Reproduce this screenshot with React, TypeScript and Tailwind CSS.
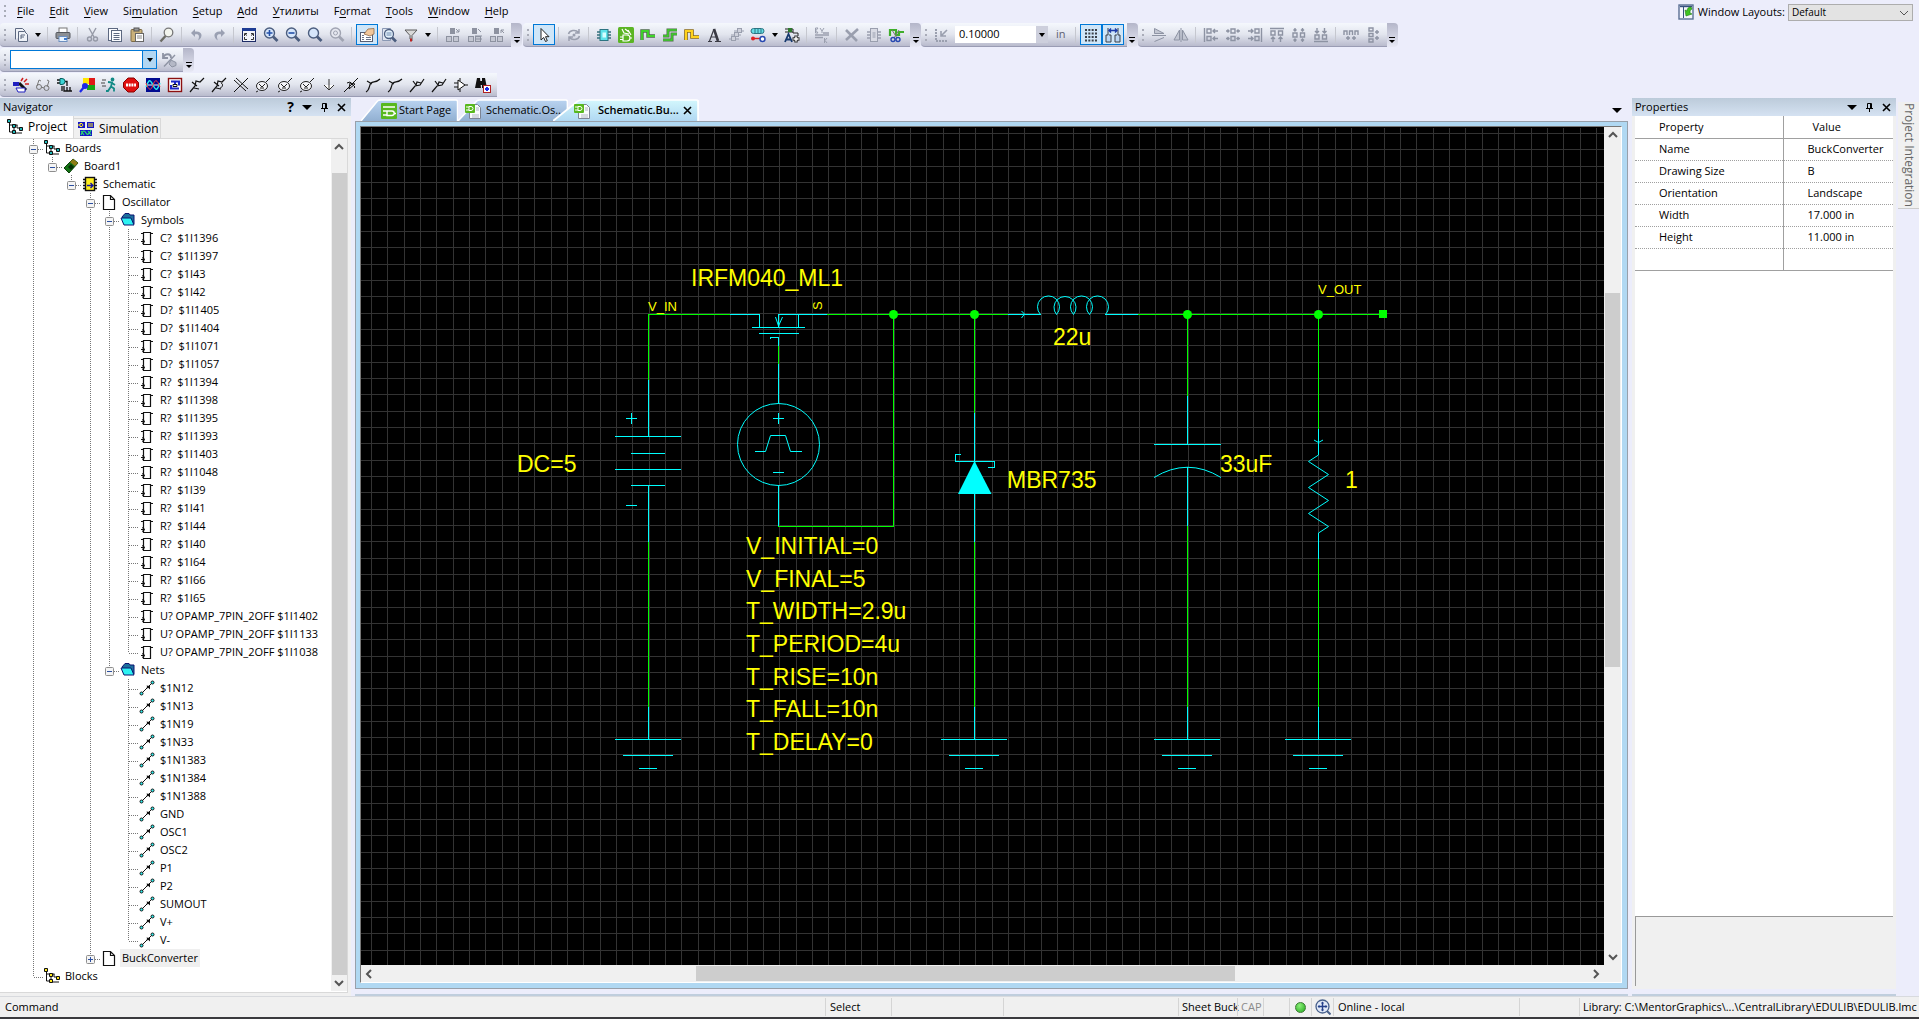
import { useState } from "react";
import type { ReactNode } from "react";

const magnifier = (color: string, fill: string) => (
  <>
    <path d="M10 9.5 14.5 14" stroke={color} strokeWidth="2.8" />
    <circle cx="6.5" cy="6" r="5" fill={fill} stroke={color} strokeWidth="1.4" />
  </>
);

const blocks = (
  <>
    <rect x="5" y="1" width="5" height="6" fill="#8d92a0" />
    <rect x="1.5" y="9.5" width="5" height="5" fill="#c4c7d2" stroke="#8d92a0" />
    <rect x="8.5" y="9.5" width="5" height="5" fill="#c4c7d2" stroke="#8d92a0" />
  </>
);

const meter = (
  <>
    <ellipse cx="7" cy="9" rx="5.5" ry="4.5" fill="#f4f4f8" stroke="#222" />
    <path d="M11 5 15 1M3 14l-2 1M4 7l3 3 3-3M5 11h4" stroke="#222" fill="none" />
  </>
);

const probe = (
  <path d="M1 15 6 9l1-5 4 1 4-4M3 5l5 4M5 11l5 1" stroke="#111" strokeWidth="1.2" fill="none" />
);

const icons: Record<string, ReactNode> = {
  newSheet: (
    <g fill="#eef1f7" stroke="#5c6880">
      <path d="M2.5 12.5v-11h7l3 3" />
      <path d="M5.5 4.5h6l3 3v7h-9z" />
      <path d="M8 12v-4h4M8 10h3" fill="none" />
    </g>
  ),
  print: (
    <>
      <rect x="4" y="1" width="8" height="5" fill="#fff" stroke="#777" />
      <rect x="1" y="5.5" width="14" height="6" rx="1" fill="#8c8f94" stroke="#55585e" />
      <rect x="4" y="9.5" width="8" height="5" fill="#eaf4ff" stroke="#6d8fc0" />
      <path d="M9 12h3" stroke="#3b7ad0" strokeWidth="2" />
    </>
  ),
  cut: (
    <g fill="none" stroke="#9599a6" strokeWidth="1.4">
      <path d="M4 1 9 10M11 1 6 10" />
      <circle cx="4.5" cy="12" r="2" />
      <circle cx="10.5" cy="12" r="2" />
    </g>
  ),
  copy: (
    <g fill="#fbfcff" stroke="#5c6880">
      <rect x="1.5" y="1.5" width="9" height="12" />
      <rect x="4.5" y="3.5" width="10" height="11" />
      <path d="M6.5 6.5h6M6.5 8.5h6M6.5 10.5h6M6.5 12.5h6" />
    </g>
  ),
  paste: (
    <>
      <rect x="2" y="2.5" width="11" height="12" rx="1" fill="#c9b07a" stroke="#7c6a45" />
      <rect x="5" y="1" width="5" height="3" fill="#999" stroke="#555" />
      <rect x="6.5" y="6.5" width="8" height="8" fill="#fff" stroke="#666" />
      <path d="M8 9h5M8 11h5" stroke="#888" />
    </>
  ),
  find: (
    <>
      <circle cx="9.5" cy="5.5" r="4.3" fill="#f3f5ee" stroke="#777" strokeWidth="1.3" />
      <path d="M6.5 9 1.5 14.5" stroke="#6c6c64" strokeWidth="2.4" />
    </>
  ),
  undo: <path d="M6 2 2 6l4 4V7.5c4-1 5 2 3 6 6-4 4-10-3-9z" fill="#9aa0b2" />,
  redo: <path d="M10 2l4 4-4 4V7.5c-4-1-5 2-3 6-6-4-4-10 3-9z" fill="#9aa0b2" />,
  fit: (
    <>
      <rect x="1.5" y="2" width="13" height="12.5" fill="#f2f4fa" stroke="#1d2b66" />
      <rect x="1" y="1" width="14" height="3" fill="#1d3c94" />
      <path
        d="M3.5 9V6.500H6M10 6.5h2.5V9M3.5 10v2.5H6M10 12.5h2.5V10M4 7l2 1.500M12 7l-2 1.500"
        stroke="#333"
        fill="none"
      />
    </>
  ),
  zoomIn: (
    <>
      {magnifier("#4b5d7e", "#d6e6fb")}
      <path d="M3.5 6h6M6.5 3v6" stroke="#2350a8" strokeWidth="1.6" />
    </>
  ),
  zoomOut: (
    <>
      {magnifier("#4b5d7e", "#d6e6fb")}
      <path d="M3.5 6h6" stroke="#2350a8" strokeWidth="1.6" />
    </>
  ),
  zoom: magnifier("#4b5d7e", "#d6e6fb"),
  zoomLast: (
    <>
      {magnifier("#a0a4b2", "#e6e8f0")}
      <circle cx="6.5" cy="6" r="2" fill="none" stroke="#a0a4b2" />
    </>
  ),
  properties: (
    <>
      <rect x="1.5" y="5.5" width="12" height="9" fill="#fff" stroke="#555e74" />
      <path d="M3 8.5h2M3 10.5h2M3 12.5h2M7 10.5h5M7 12.5h5" stroke="#6b7488" />
      <path d="M5 7l4-5 6-.5V7l-4 2z" fill="#f2c79a" stroke="#8f6a48" strokeWidth=".8" />
    </>
  ),
  review: (
    <>
      <path d="M1.500 1.500h8v12h-8z" fill="#dfe5f0" stroke="#8a98b4" />
      <path d="M11 10.500l4 4" stroke="#4b5d7e" strokeWidth="2.6" />
      <circle cx="8" cy="7" r="4.5" fill="#e3f1fb" stroke="#4b5d7e" strokeWidth="1.3" />
      <path d="M5.5 6h5M5.500 8h5" stroke="#6c88ad" />
    </>
  ),
  filter: (
    <>
      <path d="M2 3h12L9 8.5V14L7 12V8.5z" fill="#d9d9d9" stroke="#5a5a5a" />
      <path d="M8 11.5v3" stroke="#b22" strokeWidth="2" />
    </>
  ),
  blocksDown: (
    <>
      {blocks}
      <path d="M11 2l3 3M14 2v3h-3" stroke="#8d92a0" fill="none" />
    </>
  ),
  blocksList: (
    <>
      {blocks}
      <path d="M11 2l3 3M8 9h7M8 12h7" stroke="#8d92a0" fill="none" />
    </>
  ),
  blocksUp: (
    <>
      {blocks}
      <path d="M15 6l-3-3M12 6V3h3" stroke="#8d92a0" fill="none" />
    </>
  ),
  pointer: <path d="M5 1.5V13l2.700-2.500 1.800 4 1.800-.8-1.800-4H13z" fill="#fff" stroke="#222" />,
  reload: (
    <>
      <path
        d="M2.5 7a5.500 4.500 0 0 1 10-1.500M13.5 9a5.500 4.500 0 0 1-10 1.500M13 2v4H9M3 14v-4h4"
        fill="none"
        stroke="#9a9fae"
        strokeWidth="1.5"
      />
      <circle cx="8" cy="8" r="1.5" fill="#9a9fae" />
    </>
  ),
  part: (
    <>
      <path d="M1 5h14M1 8h14M1 11h14" stroke="#35707c" strokeWidth="1.6" />
      <rect x="4" y="2.5" width="8" height="11" fill="#5fe3ea" stroke="#2c7482" />
      <rect x="6.5" y="5.5" width="3.5" height="5" fill="#d8ffff" />
    </>
  ),
  library: (
    <>
      <rect width="16" height="16" rx="1.5" fill="#5bb524" />
      <path
        d="M5 8h4a3 3 0 0 1 0 6H5zM2 10h3M2 12.5h3M12 11h2M4 2l2 4 5 1M7 2l4 3M10 3l3 5"
        fill="none"
        stroke="#fff"
        strokeWidth="1.2"
      />
    </>
  ),
  net: (
    <>
      <path d="M2 13V4h6v5h7" fill="none" stroke="#4e6a4a" strokeWidth="3.4" />
      <path d="M2 13V4h6v5h7" fill="none" stroke="#3fd42a" strokeWidth="1.8" />
    </>
  ),
  bus: (
    <>
      <path d="M1 9h5V3h9M1 13h9V7h5" fill="none" stroke="#4e6a4a" strokeWidth="3" />
      <path d="M1 9h5V3h9M1 13h9V7h5" fill="none" stroke="#3fd42a" strokeWidth="1.5" />
    </>
  ),
  ripNet: (
    <>
      <path d="M2 13V4h6v6h7" fill="none" stroke="#8a6b14" strokeWidth="3.6" />
      <path d="M2 13V4h6v6h7" fill="none" stroke="#ffd21c" strokeWidth="2" />
    </>
  ),
  text: (
    <g fill="none" stroke="#3a3a44">
      <path d="M2 14.500h4M9 14.500h6M3.500 14 8 2M5 10h6" strokeWidth="1.2" />
      <path d="M8 2l4 12" strokeWidth="2.6" />
    </g>
  ),
  array: (
    <g fill="#cfd2dc" stroke="#9a9fae">
      <path d="M1 12h10M3 8h10M6 4h10" />
      <rect x="9.5" y="1.5" width="4" height="4" />
      <rect x="6.5" y="5.5" width="4" height="4" />
      <rect x="3.5" y="9.5" width="4" height="4" />
    </g>
  ),
  links: (
    <>
      <rect x="1" y="1.5" width="13" height="5" rx="2.5" fill="#66dfe6" stroke="#2c7482" />
      <path d="M5 2v4M8 2v4M11 2v4" stroke="#2c7482" />
      <path d="M3 11.5h8" stroke="#d22" strokeWidth="1.4" />
      <circle cx="3" cy="11.5" r="2" fill="#d22" />
      <circle cx="12.5" cy="12" r="2.5" fill="#fff" stroke="#2748b0" strokeWidth="1.4" />
    </>
  ),
  addText: (
    <>
      <path d="M1 2h8M1 5h8M9 2v4h5v3" stroke="#222" fill="none" />
      <rect x="4" y="1" width="4" height="4" fill="#2d7a2d" />
      <path d="M1 15 4.5 7 8 15M2.5 12.5h4" stroke="#17396e" strokeWidth="1.8" fill="none" />
      <path d="M12 8.5v7M8.5 12h7" stroke="#333" strokeWidth="3.4" />
      <path d="M12 9.5v5M9.5 12h5" stroke="#fff" strokeWidth="1.5" />
    </>
  ),
  swap: (
    <g fill="none" stroke="#9a9fae">
      <path d="M1.500 1v5h2.500l-2-2.500 2-2.500zM6 1l2 3 2-3M8 4v2" />
      <path d="M1 8h14M1 10.500h8M9 6h6" strokeWidth="1.6" />
      <path d="M10.500 11v5M13 11l-2 2.500 2 2.500" />
    </g>
  ),
  remove: <path d="M2 3 13 14M14 2 2 13" stroke="#9a9fae" strokeWidth="2.6" />,
  partGray: (
    <>
      <path d="M1 5h14M1 8h14M1 11h14" stroke="#9a9fae" strokeWidth="1.6" />
      <rect x="4.5" y="1.5" width="7" height="13" fill="#d9dbe4" stroke="#9a9fae" />
      <rect x="6.5" y="5" width="3" height="6" fill="#b9bdc9" />
    </>
  ),
  cutNet: (
    <>
      <path d="M2 9V3h6v5h3V5h5" fill="none" stroke="#3fae2a" strokeWidth="2.2" />
      <path d="M4 3l5 8M11 3l-5 8" stroke="#777" />
      <circle cx="5" cy="12.5" r="2" fill="none" stroke="#2748b0" strokeWidth="1.4" />
      <circle cx="10" cy="12.5" r="2" fill="none" stroke="#2748b0" strokeWidth="1.4" />
    </>
  ),
  snapOrigin: (
    <>
      <path d="M2 2v12h12" fill="none" stroke="#9a9fae" strokeWidth="2" strokeDasharray="2 1" />
      <path d="M13 3 7 9M7 4v5h5" fill="none" stroke="#9a9fae" strokeWidth="1.6" />
    </>
  ),
  gridDots: (
    <path
      d="M2 3h12M2 6.500h12M2 10h12M2 13.500h12"
      stroke="#3a4048"
      strokeWidth="1.8"
      strokeDasharray="2 1.330"
    />
  ),
  spacing: (
    <>
      <path d="M3 1v7H1v7h5V8H4M13 1v7h2v7h-5V8h2" fill="#bcd6f2" stroke="#3a4048" />
      <path d="M4 3.5h8M6 1.5l-2 2 2 2M10 1.5l2 2-2 2" fill="none" stroke="#1d3ca8" strokeWidth="1.4" />
    </>
  ),
  flipV: <path d="M3.500 1.500 13 6.500H3.500zM1 8.500h14M3.500 14.500 13 10.500" fill="#c3c7d3" stroke="#8d93a3" />,
  flipH: <path d="M6.5 3 1 13h5.5zM9.5 3 15 13H9.5zM8 1v14" fill="#c3c7d3" stroke="#8d93a3" />,
  alignLeft: (
    <path
      d="M1.5 1v14M4 2h4v4H4zM4 9.5h4v4H4zM15 4h-5M12 2l-2 2 2 2M15 11.5h-5M12 9.5l-2 2 2 2"
      fill="none"
      stroke="#8d93a3"
      strokeWidth="1.4"
    />
  ),
  alignCenter: (
    <path
      d="M6 2h4v4H6zM6 9.5h4v4H6zM1 4h3M2.5 2.5 4 4 2.5 5.5M15 4h-3M13.5 2.5 12 4l1.5 1.5M1 11.5h3M2.5 10 4 11.5 2.5 13M15 11.5h-3M13.5 10 12 11.5l1.5 1.5"
      fill="none"
      stroke="#8d93a3"
      strokeWidth="1.4"
    />
  ),
  alignRight: (
    <path
      d="M14.5 1v14M8 2h4v4H8zM8 9.5h4v4H8zM1 4h5M4 2l2 2-2 2M1 11.5h5M4 9.5l2 2-2 2"
      fill="none"
      stroke="#8d93a3"
      strokeWidth="1.4"
    />
  ),
  alignTop: (
    <path
      d="M1 1.5h14M2 4h4v4H2zM9.5 4h4v4h-4zM4 15v-5M2 12l2-2 2 2M11.5 15v-5M9.5 12l2-2 2 2"
      fill="none"
      stroke="#8d93a3"
      strokeWidth="1.4"
    />
  ),
  alignMiddle: (
    <path
      d="M2 6h4v4H2zM9.5 6h4v4h-4zM4 1v3M2.5 2.5 4 4l1.5-1.5M11.5 1v3M10 2.5 11.5 4 13 2.5M4 15v-3M2.5 13.5 4 12l1.5 1.5M11.5 15v-3M10 13.5l1.5-1.5 1.5 1.5"
      fill="none"
      stroke="#8d93a3"
      strokeWidth="1.4"
    />
  ),
  alignBottom: (
    <path
      d="M1 14.5h14M2 8h4v4H2zM9.5 8h4v4h-4zM4 1v5M2 4l2 2 2-2M11.5 1v5M9.5 4l2 2 2-2"
      fill="none"
      stroke="#8d93a3"
      strokeWidth="1.4"
    />
  ),
  spreadH: (
    <path
      d="M1 8V4h3v4M6.5 8V4h3v4M12 8V4h3v4M3 11h4M9 11h4M5 9v4M11 9v4"
      fill="none"
      stroke="#8d93a3"
      strokeWidth="1.4"
    />
  ),
  spreadV: (
    <path
      d="M4 1h4v3H4zM4 6.5h4v3H4zM4 12h4v3H4zM10 5h4M12 3v4M10 11h4M12 9v4"
      fill="none"
      stroke="#8d93a3"
      strokeWidth="1.4"
    />
  ),
  crossProbe: (
    <>
      <path d="M2 1v5h5M2 6c2-5 8-5 8 0" fill="none" stroke="#8d93a3" strokeWidth="1.8" />
      <path d="M3 14.500 14 3" stroke="#8d93a3" strokeWidth="1.4" />
      <path d="M10 8l5 2.500v3l-4 1.500-3-3z" fill="#b4b8c6" stroke="#8d93a3" />
    </>
  ),
  wizard: (
    <>
      <path d="M6 6l7 7" stroke="#111" strokeWidth="3" />
      <rect x="0" y="5" width="6" height="4" fill="#2020c0" />
      <path d="M3 11h9v4H5z" fill="#fff" stroke="#2020c0" />
      <path d="M8 4l2-3M11 5l3-3M12 7h4" stroke="#d02020" strokeWidth="1.5" />
    </>
  ),
  glasses: (
    <g fill="none" stroke="#777">
      <path d="M2 9 4 3l2 1M12 10l2-6-2-1M6 10l3 1" />
      <circle cx="4" cy="10" r="2.5" />
      <circle cx="11.5" cy="11" r="2.5" />
    </g>
  ),
  plugNetlist: (
    <>
      <path d="M0 3h3M0 6h3M7 4.5h3V9M5 9v5M7 9v5h8M10 10v4M13 10v4" stroke="#111" strokeWidth="1.3" fill="none" />
      <path d="M3 1.5h2a3 3 0 0 1 0 6H3z" fill="#3dd6d6" stroke="#0a6060" />
    </>
  ),
  palette: (
    <>
      <rect x="4" y="1" width="6" height="6" fill="#ffe600" />
      <rect x="10" y="1" width="6" height="7" fill="#e01818" />
      <rect x="8" y="8" width="8" height="5" fill="#16a516" />
      <circle cx="6" cy="9" r="3" fill="#1c28e8" />
      <path d="M1 15l4-5" stroke="#1c28e8" strokeWidth="2.2" />
    </>
  ),
  run: (
    <g fill="none" stroke="#128a86" strokeWidth="1.8">
      <circle cx="11.5" cy="2.5" r="1" />
      <path d="M7 5l4 .5-1 4 3 2v3M10 9.5 7 14H5M11 6l3 2" />
      <path d="M1 3h4M0 6h4M1 9h4" stroke="#444" strokeWidth="1" />
    </g>
  ),
  stop: (
    <>
      <path d="M5 1h6l4.5 4.5v5L11 15H5L.5 10.5v-5z" fill="#e01010" stroke="#800" />
      <path d="M3 8h10" stroke="#fff" strokeWidth="3" strokeDasharray="2 .7" />
    </>
  ),
  waves: (
    <>
      <rect x="1" y="1" width="14" height="14" fill="#000a90" />
      <path d="M1 8h14" stroke="#fff" />
      <path d="M1 10c3-8 4-8 7-2s4 6 7-2" stroke="#2ee" strokeWidth="1.5" fill="none" />
      <path d="M1 6c3 8 5 8 7 2s4-6 7 2" stroke="#f33" fill="none" />
    </>
  ),
  simView: (
    <>
      <rect x="1.5" y="1.5" width="13" height="13" fill="#fff" stroke="#8c1010" strokeWidth="1.4" />
      <path d="M4 4.500h8v4M12 11.500H4V8M8 4v3" stroke="#1c28c8" strokeWidth="2" fill="none" />
      <path d="M6 7.500h4v2H6z" stroke="#111" fill="none" />
    </>
  ),
  probeV: probe,
  probeI: (
    <>
      {probe}
      <path d="M10 6c3 1 1 5-1 5" stroke="#111" fill="none" />
    </>
  ),
  probeDiff: <path d="M1 15 15 1M1 3l12 11M3 1l12 11" stroke="#111" fill="none" />,
  meter,
  ground: <path d="M8 2v10M3 8l5 5 5-5" stroke="#333" fill="#fff" />,
  diode: <path d="M1 15 15 1M4 6l3-1 5 5-1 1M6 12l1-6 5 1z" stroke="#111" fill="none" />,
  netCurve: <path d="M1 15c4-2 3-7 5-9s5 0 9-4M2 4l5 3" stroke="#111" strokeWidth="1.2" fill="none" />,
  netPeak: <path d="M1 15 6 9l5-1 4-6M4 4l3 4 1-3 4 1" stroke="#111" fill="none" strokeWidth="1.2" />,
  gate: <path d="M1 6h4M1 10h4M5 3l7 5-7 5zM12 8h3M7 1v3M7 12v3" stroke="#111" fill="#fff" />,
  findPart: (
    <>
      <path d="M2 1h3l1 10H0zM7 1h3l2 10H7zM5 4h3v4H5z" fill="#111" />
      <rect x="8.5" y="8.5" width="7" height="7" fill="#fff" stroke="#b02020" />
      <path d="M10 12h4M12 10v4" stroke="#1c28e8" strokeWidth="2" />
    </>
  ),
  layouts: (
    <>
      <rect x="1" y="1" width="14" height="14" fill="#f4f6fb" stroke="#5a6f94" strokeWidth="1.4" />
      <path d="M2 2.500h12" stroke="#34507e" strokeWidth="1.400" />
      <path d="M5.500 3v11" stroke="#34507e" />
      <path d="M13 3c-3 0-4 2-4 4l-2-1 1 6 6-2-2-1c0-2 0-3 2-4z" fill="#3fc41f" stroke="#1f7a12" strokeWidth=".6" />
    </>
  ),
  tree: (
    <>
      <path d="M2.5 2v11H8M2.5 6h8M10 6v3h4M7 9v5h8" stroke="#111" fill="none" />
      <path d="M.5.5h3v3h-3zM5.500 5.500h3v3h-3zM12.500 8.500h3v3h-3zM5.500 11.500h3v3h-3z" fill="#1fb8b8" stroke="#111" />
    </>
  ),
  treeYellow: (
    <>
      <path d="M2.5 2v11H8M2.5 6h8M10 6v3h4M7 9v5h8" stroke="#111" fill="none" />
      <path d="M.5.5h3v3h-3zM5.500 5.500h3v3h-3zM12.500 8.500h3v3h-3zM5.500 11.500h3v3h-3z" fill="#ffe81c" stroke="#111" />
    </>
  ),
  simTab: (
    <>
      <path d="M0 1h7v6H0zM9 1h7v6H9z" fill="#1414c8" />
      <path d="M0 4h2M2 2.500h2q2 1.500 0 3H2zM10 3h5M10 5h5" stroke="#ffee20" fill="none" />
      <rect x="2" y="9" width="12" height="6" fill="#1414c8" />
      <path d="M3 14c2-6 4-4 5-2s3 2 5-3M3 10l3 4M10 10l3 4" stroke="#2ee06a" fill="none" strokeWidth="1.2" />
    </>
  ),
  board: (
    <>
      <path d="M1 10 10 1l5 4-9 10z" fill="#157315" stroke="#0a3d0a" />
      <path d="M10 1l5 4-3 3-5-4z" fill="#8c7b14" />
      <path d="M5 9l3-3 3 3-3 3z" fill="#053005" />
    </>
  ),
  schematic: (
    <>
      <path d="M1 3.500h14M1 6.500h14M1 9.500h14M1 12.500h14" stroke="#111" strokeWidth="1.4" />
      <rect x="3.5" y="1.5" width="9" height="13" fill="#ffee20" stroke="#111" strokeWidth="1.4" />
      <path d="M5 9.5h6M8.5 7l2.5 2.5L8.5 12" stroke="#1414a0" fill="none" strokeWidth="1.4" />
    </>
  ),
  sheet: <path d="M2.5 1.5h7l4 4v10h-11zM9.5 1.5v4h4" fill="#fff" stroke="#111" strokeWidth="1.2" />,
  folder: (
    <>
      <path d="M2 5 5 1.5h4L10 3h4v9H6z" fill="#1c6f9c" stroke="#0b1470" />
      <path d="M1 6h10l3 7H4z" fill="#2df2f2" stroke="#0b1470" />
    </>
  ),
  symbol: (
    <>
      <path d="M2 3.5h12M2 11.5h3" stroke="#111" />
      <path d="M4.5 2.5h7v12h-7z" fill="#fff" stroke="#111" strokeWidth="1.2" />
      <path d="M3 9.500l3 2-3 2" fill="none" stroke="#111" />
    </>
  ),
  netNode: (
    <>
      <path d="M3 13 13 3" stroke="#111" />
      <path d="M7.500 5.500l3.500.500v3.500l-1.500-1.500-2 .5.500-2z" fill="#111" />
      <circle cx="2.5" cy="13.5" r="1.500" fill="#2df2f2" stroke="#111" />
      <circle cx="13.5" cy="2.5" r="1.500" fill="#2df2f2" stroke="#111" />
    </>
  ),
  startPage: (
    <>
      <rect width="16" height="16" rx="1" fill="#58b81e" />
      <path
        d="M2 4h12M2 8h4M2 12h4M6 8h5a2 2 0 0 1 0 4.500H6zM13 10.500h2"
        stroke="#fff"
        strokeWidth="1.4"
        fill="none"
      />
    </>
  ),
  docSheet: (
    <>
      <path d="M4.500 1.500h8l3 3v11h-11z" fill="#fafbfd" stroke="#7c8494" />
      <path d="M11 5h3M11 7h3M7 12h7M7 14h7" stroke="#b0b6c4" />
      <rect x="0" y="1" width="10" height="9" rx="1" fill="#58b81e" />
      <path d="M1 4h3M1 7h3M4 3.5h2a2 2 0 0 1 0 4H4z" stroke="#fff" fill="none" />
    </>
  ),
  panZoom: (
    <>
      <path d="M12 12l3.5 3.5" stroke="#48608c" strokeWidth="2" />
      <circle cx="7.5" cy="7.5" r="6.5" fill="#dfe7f6" stroke="#48608c" strokeWidth="1.3" />
      <path d="M7.5 3v9M3 7.5h9" stroke="#25408a" strokeWidth="1.4" />
      <path
        d="M6 4.5 7.5 2.5 9 4.5zM6 10.5l1.5 2 1.5-2zM4.5 6l-2 1.5 2 1.5zM10.5 6l2 1.5-2 1.5z"
        fill="#25408a"
      />
    </>
  ),
};

function Icon({ name }: { name: string }) {
  return (
    <svg viewBox="0 0 16 16" className="h-4 w-4 shrink-0" aria-hidden="true">
      {icons[name]}
    </svg>
  );
}

function Caret() {
  return <span className="h-0 w-0 border-x-3 border-t-4 border-x-transparent border-t-black" />;
}

function Grip() {
  return (
    <span className="flex w-[10px] shrink-0 flex-col items-center gap-[3px]">
      <span className="h-[2px] w-[2px] bg-[#a9acb8]" />
      <span className="h-[2px] w-[2px] bg-[#a9acb8]" />
      <span className="h-[2px] w-[2px] bg-[#a9acb8]" />
    </span>
  );
}

function ToolButton({ name, active }: { name: string; active?: boolean }) {
  return (
    <button
      type="button"
      aria-label={name}
      className={
        active
          ? "flex h-[21px] w-[22px] shrink-0 items-center justify-center border border-[#0078d7] bg-[#cfe6f8]"
          : "flex h-[21px] w-[22px] shrink-0 items-center justify-center"
      }
    >
      <Icon name={name} />
    </button>
  );
}

// "|" is a separator, "v" a drop-down arrow, a leading "*" marks a pressed button
function Tools({ items }: { items: string[] }) {
  return (
    <>
      {items.map((item, i) => {
        if (item === "|") {
          return <span key={i} className="mr-1 ml-[3px] h-4 w-px shrink-0 bg-[#c5c7cf]" />;
        }
        if (item === "v") {
          return (
            <button
              key={i}
              type="button"
              aria-label="More"
              className="flex h-5 w-3 shrink-0 items-center justify-center"
            >
              <Caret />
            </button>
          );
        }
        return <ToolButton key={i} name={item.replace("*", "")} active={item.startsWith("*")} />;
      })}
    </>
  );
}

function Toolbar({ children, cap = true }: { children: ReactNode; cap?: boolean }) {
  return (
    <div className="flex h-6 shrink-0">
      <div className="flex items-center rounded-l-sm border-b border-[#9a9cb4] bg-linear-to-b from-[#f5f8fd] via-[#e2e5ee] to-[#b9bbcd] pr-[3px]">
        <Grip />
        {children}
      </div>
      {cap && (
        <button
          type="button"
          aria-label="Toolbar options"
          className="flex w-[11px] flex-col items-center justify-end gap-[2px] rounded-r-sm bg-linear-to-b from-[#b4b6c9] to-[#e8e9f5] pb-1"
        >
          <span className="h-px w-[6px] bg-black" />
          <span className="h-0 w-0 border-x-3 border-t-3 border-x-transparent border-t-black" />
        </button>
      )}
    </div>
  );
}

// label split around its underlined access key
const menus: [string, string, string][] = [
  ["", "F", "ile"],
  ["", "E", "dit"],
  ["", "V", "iew"],
  ["Si", "m", "ulation"],
  ["", "S", "etup"],
  ["", "A", "dd"],
  ["", "У", "тилиты"],
  ["F", "o", "rmat"],
  ["", "T", "ools"],
  ["", "W", "indow"],
  ["", "H", "elp"],
];

const mainTools = [
  "newSheet", "v", "|", "print", "|", "cut", "copy", "paste", "|", "find", "|", "undo", "redo", "|",
  "fit", "zoomIn", "zoomOut", "zoom", "zoomLast", "|", "*properties", "review", "filter", "v", "|",
  "blocksDown", "blocksList", "blocksUp",
];

const drawTools = [
  "*pointer", "|", "reload", "|", "part", "library", "net", "bus", "ripNet", "text", "array", "links", "v",
  "addText", "|", "swap", "|", "remove", "partGray", "cutNet",
];

const arrangeTools = [
  "flipV", "flipH", "|", "alignLeft", "alignCenter", "alignRight", "alignTop", "alignMiddle", "alignBottom", "|",
  "spreadH", "spreadV",
];

const simTools = [
  "wizard", "glasses", "plugNetlist", "palette", "run", "stop", "waves", "simView", "probeV", "probeI", "probeDiff",
  "meter", "meter", "meter", "ground", "diode", "netCurve", "netCurve", "netPeak", "netPeak", "gate", "findPart",
];

function MenuArea() {
  const [grid, setGrid] = useState("0.10000");
  return (
    <header className="flex shrink-0 flex-col gap-px pb-px">
      <div className="flex h-[22px] items-center justify-between">
        <nav className="flex items-center">
          <Grip />
          <span className="w-[7px]" />
          {menus.map(([before, key, after]) => (
            <button key={key + after} type="button" className="mr-[15px] leading-4">
              {before}
              <span className="underline underline-offset-2">{key}</span>
              {after}
            </button>
          ))}
        </nav>
        <div className="flex items-center pt-[2px] pr-[6px]">
          <Icon name="layouts" />
          <label htmlFor="layout" className="mr-[3px] ml-1">
            Window Layouts:
          </label>
          <span className="relative">
            <select
              id="layout"
              className="block h-[17px] w-[125px] appearance-none border border-[#adadad] bg-[#e3e3e3] pl-[3px] text-[10px] leading-[15px]"
            >
              <option>Default</option>
            </select>
            <svg viewBox="0 0 10 6" className="pointer-events-none absolute top-[6px] right-1 h-[6px] w-[10px]">
              <path d="M1 1l4 4 4-4" fill="none" stroke="#555" />
            </svg>
          </span>
        </div>
      </div>
      <div className="flex">
        <Toolbar>
          <Tools items={mainTools} />
        </Toolbar>
        <span className="w-px" />
        <Toolbar>
          <Tools items={drawTools} />
        </Toolbar>
        <Toolbar>
          <ToolButton name="snapOrigin" />
          <span className="ml-[2px] flex h-[17px] bg-white">
            <input
              aria-label="Grid spacing"
              value={grid}
              onChange={(e) => setGrid(e.target.value)}
              className="w-[81px] pl-1"
            />
            <button type="button" aria-label="Grid list" className="flex w-3 items-center justify-center bg-[#cdcfdc]">
              <Caret />
            </button>
          </span>
          <span className="pr-[6px] pl-2 text-[#5d6070]">in</span>
          <Tools items={["|", "*gridDots", "*spacing"]} />
        </Toolbar>
        <Toolbar>
          <Tools items={arrangeTools} />
        </Toolbar>
      </div>
      <Toolbar>
        <span className="flex h-[19px] border border-[#0078d7] bg-white">
          <input aria-label="Find text" className="w-[131px]" />
          <button
            type="button"
            aria-label="Find list"
            className="flex w-[14px] items-center justify-center border-l border-[#0078d7] bg-[#b3d7f2]"
          >
            <Caret />
          </button>
        </span>
        <span className="w-px" />
        <ToolButton name="crossProbe" />
      </Toolbar>
      <Toolbar cap={false}>
        <Tools items={simTools} />
      </Toolbar>
    </header>
  );
}

interface TreeRow {
  depth: number;
  icon: string;
  label: string;
  state?: "open" | "closed";
  last?: boolean;
  selected?: boolean;
}

const symbols = [
  "C?  $1I1396", "C?  $1I1397", "C?  $1I43", "C?  $1I42", "D?  $1I1405", "D?  $1I1404", "D?  $1I1071", "D?  $1I1057",
  "R?  $1I1394", "R?  $1I1398", "R?  $1I1395", "R?  $1I1393", "R?  $1I1403", "R?  $1I1048", "R?  $1I39", "R?  $1I41",
  "R?  $1I44", "R?  $1I40", "R?  $1I64", "R?  $1I66", "R?  $1I65", "U? OPAMP_7PIN_2OFF $1I1402",
  "U? OPAMP_7PIN_2OFF $1I1133", "U? OPAMP_7PIN_2OFF $1I1038",
];

const nets = [
  "$1N12", "$1N13", "$1N19", "$1N33", "$1N1383", "$1N1384", "$1N1388", "GND", "OSC1", "OSC2", "P1", "P2", "SUMOUT",
  "V+", "V-",
];

const rows: TreeRow[] = [
  { depth: 0, icon: "tree", label: "Boards", state: "open" },
  { depth: 1, icon: "board", label: "Board1", state: "open", last: true },
  { depth: 2, icon: "schematic", label: "Schematic", state: "open", last: true },
  { depth: 3, icon: "sheet", label: "Oscillator", state: "open" },
  { depth: 4, icon: "folder", label: "Symbols", state: "open" },
  ...symbols.map((label, i) => ({ depth: 5, icon: "symbol", label, last: i === symbols.length - 1 })),
  { depth: 4, icon: "folder", label: "Nets", state: "open", last: true },
  ...nets.map((label, i) => ({ depth: 5, icon: "netNode", label, last: i === nets.length - 1 })),
  { depth: 3, icon: "sheet", label: "BuckConverter", state: "closed", last: true, selected: true },
  { depth: 0, icon: "treeYellow", label: "Blocks", last: true },
];

// true when an ancestor level still has siblings further down
function hasGuide(index: number, depth: number) {
  const next = rows.slice(index + 1).find((row) => row.depth <= depth);
  return next !== undefined && next.depth === depth;
}

function NavigatorTree() {
  return (
    <ul className="flex-1 overflow-hidden">
      {rows.map((row, i) => (
        <li key={row.label} className="flex h-[18px] items-center pl-[24px]">
          {Array.from({ length: row.depth }, (_, d) => (
            <svg key={d} viewBox="0 0 19 18" className="h-[18px] w-[19px] shrink-0">
              {hasGuide(i, d) && <path d="M9.5 0v18" stroke="#777" strokeDasharray="1 1" />}
            </svg>
          ))}
          <svg viewBox="0 0 20 18" className="h-[18px] w-[20px] shrink-0">
            <path
              d={`M9.5 0v${row.last ? 10 : 18}M10 10.5h10`}
              fill="none"
              stroke="#777"
              strokeDasharray="1 1"
            />
            {row.state && (
              <>
                <rect x="5.5" y="6.5" width="8" height="8" rx="1" fill="#f4f4f4" stroke="#8e8e8e" />
                <path d={row.state === "open" ? "M7 10.5h5" : "M7 10.5h5M9.5 8v5"} stroke="#2b4fa0" />
              </>
            )}
          </svg>
          <Icon name={row.icon} />
          <span
            className={
              row.selected
                ? "ml-[3px] bg-[#efefef] px-[2px] leading-[18px] whitespace-pre"
                : "ml-[5px] leading-[18px] whitespace-pre"
            }
          >
            {row.label}
          </span>
        </li>
      ))}
    </ul>
  );
}

function PanelHeader({ title, help }: { title: string; help?: boolean }) {
  return (
    <div className="flex h-[18px] shrink-0 items-center justify-between bg-linear-to-b from-[#bccbda] to-[#d5e2f2] pr-[5px] pl-[3px]">
      <h2>{title}</h2>
      <div className="flex items-center gap-[8px]">
        {help && (
          <button type="button" className="text-sm leading-4 font-bold">
            ?
          </button>
        )}
        <button type="button" aria-label="Menu" className="flex">
          <span className="h-0 w-0 border-x-5 border-t-5 border-x-transparent border-t-black" />
        </button>
        <button type="button" aria-label="Pin">
          <svg viewBox="0 0 9 9" className="h-[9px] w-[9px]">
            <path d="M2.5 5.5v-5h4v5M5.5 0v5M1 5.5h7M4.5 6v3" fill="none" stroke="#000" />
          </svg>
        </button>
        <button type="button" aria-label="Close">
          <svg viewBox="0 0 9 9" className="h-[9px] w-[9px]">
            <path d="M1 1l7 7M8 1 1 8" stroke="#000" strokeWidth="1.6" />
          </svg>
        </button>
      </div>
    </div>
  );
}

const arrows: Record<string, string> = {
  up: "M1 7l4-4 4 4",
  down: "M1 3l4 4 4-4",
  left: "M7 1 3 5l4 4",
  right: "M3 1l4 4-4 4",
};

function ScrollArrow({ dir }: { dir: string }) {
  return (
    <button type="button" aria-label={`Scroll ${dir}`} className="flex h-4 w-4 shrink-0 items-center justify-center">
      <svg viewBox="0 0 10 10" className="h-[10px] w-[10px]">
        <path d={arrows[dir]} fill="none" stroke="#555" strokeWidth="2" />
      </svg>
    </button>
  );
}

function Navigator() {
  return (
    <aside className="flex w-[351px] shrink-0 flex-col bg-[#f0f0f0]">
      <PanelHeader title="Navigator" help />
      <div role="tablist" className="flex h-[22px] shrink-0 items-end">
        <button
          type="button"
          role="tab"
          className="flex h-[22px] w-[74px] items-center gap-[5px] border-r border-[#d9d9d9] bg-white pl-[7px] text-xs"
        >
          <Icon name="tree" />
          Project
        </button>
        <button
          type="button"
          role="tab"
          className="flex h-[20px] w-[87px] items-center gap-[5px] border-t border-r border-[#d9d9d9] pl-[4px] text-xs"
        >
          <Icon name="simTab" />
          Simulation
        </button>
      </div>
      <div className="mr-[3px] mb-[3px] flex min-h-0 flex-1 border-t border-r border-b border-[#d9d9d9] bg-white pb-px">
        <NavigatorTree />
        <div className="flex w-4 flex-col items-center bg-[#f0f0f0]">
          <ScrollArrow dir="up" />
          <span className="h-[18px]" />
          <span className="w-[15px] flex-1 bg-[#cdcdcd]" />
          <ScrollArrow dir="down" />
        </div>
      </div>
    </aside>
  );
}

function TabShape({ active }: { active?: boolean }) {
  return (
    <svg viewBox="0 0 100 22" preserveAspectRatio="none" className="absolute inset-0 -z-10 h-full w-full">
      <defs>
        <linearGradient id="tab-idle" x2="0" y2="1">
          <stop stopColor="#b9d3f0" />
          <stop offset="1" stopColor="#92b0d2" />
        </linearGradient>
        <linearGradient id="tab-active" x2="0" y2="1">
          <stop stopColor="#d3f7fd" />
          <stop offset="1" stopColor="#b0d8f2" />
        </linearGradient>
      </defs>
      <path
        d="M0 22 17 2Q18 1 20 1H98Q99.5 1 99.5 3V22"
        fill={active ? "url(#tab-active)" : "url(#tab-idle)"}
        stroke="#fff"
        strokeWidth="1.5"
      />
    </svg>
  );
}

// wires and devices are given in window pixels, the sheet group shifts them into place
const wires = [
  "M648.5 380V314.5H730",
  "M827 314.5H1008",
  "M1138 314.5H1383",
  "M778.5 346V364",
  "M778 526.5H893.5V314",
  "M648.5 542V707",
  "M974.5 314V413M974.5 542V707",
  "M1187.5 314V396M1187.5 526V707",
  "M1318.5 314V429M1318.5 559V707",
];

const devices = [
  // battery
  "M648.5 380V436M615 436.5H681M631 453.5H665M615 469.5H681M631 485.5H665M648.5 485V542",
  "M626 418.5H637M631.5 413V424M626 505.5H637",
  // mosfet
  "M730 314.5H759.5V327M752 327.5H805M759 333.5H799M798.5 327V314M778.5 327V314.5H827M770.5 339V337.5H778.5V346",
  // pulse source leads
  "M778.5 364V404M778.5 485V526M773 418.5H784M778.5 413V424M773 472.5H784",
  // diode
  "M974.5 413V461M961 454.5H955.5V461.5H994.5V467.5H988M974.5 493V542",
  // inductor leads
  "M1008 314.5H1041M1105 314.5H1138",
  // capacitor
  "M1187.5 396V444M1154 444.5H1221M1187.5 467V526",
  // resistor leads
  "M1318.5 429V455M1318.5 533V559",
];

const curves = [
  "M775.5 317 778.5 326 782.5 317",
  "M755 451.5H765.5L770.5 435.5H785.5L790.5 451.5H802",
  "M1021.5 311 1024.5 314 1021.5 318",
  "M1040.5 314.5a11 11 0 1 1 16 0a11 11 0 1 1 17 0a11 11 0 1 1 16 0a11 11 0 1 1 16 0",
  "M1154 477.5Q1187.5 457 1221 477.5",
  "M1314 440l4.5 2.5 4.5-2.5",
  "M1318.5 455 1308.5 461.5 1328.5 474.5 1308.5 487.5 1328.5 500.5 1308.5 513.5 1328.5 526.5 1318.5 533",
];

const groundXs = [648, 974, 1187, 1318];
const junctionXs = [893, 974, 1187, 1318];

const labels: [string, number, number][] = [
  ["IRFM040_ML1", 691, 286],
  ["22u", 1053, 345],
  ["DC=5", 517, 472],
  ["33uF", 1220, 472],
  ["MBR735", 1007, 488],
  ["1", 1345, 488],
  ["V_INITIAL=0", 746, 554],
  ["V_FINAL=5", 746, 587],
  ["T_WIDTH=2.9u", 746, 619],
  ["T_PERIOD=4u", 746, 652],
  ["T_RISE=10n", 746, 685],
  ["T_FALL=10n", 746, 717],
  ["T_DELAY=0", 746, 750],
];

const gridPitch = 49 / 3;
const gridPath = Array.from({ length: 240 }, (_, i) => {
  const x = Math.floor(371.4 + i * gridPitch) + 0.5;
  const y = Math.floor(133.4 + i * gridPitch) + 0.5;
  return `M${x} 128V4000M361 ${y}H4000`;
}).join("");

function Schematic() {
  return (
    <svg
      className="h-full w-full bg-black font-['Liberation_Sans',Arial,sans-serif]"
      role="img"
      aria-label="BuckConverter"
    >
      <g transform="translate(-361 -127)" fill="none">
        <path d={gridPath} stroke="#333" shapeRendering="crispEdges" />
        <path d={wires.join("")} stroke="#0f0" shapeRendering="crispEdges" />
        <g stroke="#0ff">
          <path d={devices.join("")} shapeRendering="crispEdges" />
          <path d={curves.join("")} />
          <circle cx="778.5" cy="444.5" r="41" />
          {groundXs.map((x) => (
            <path
              key={x}
              d={`M${x + 0.5} 707V739M${x - 33} 739.5h66M${x - 25} 755.5h50M${x - 9} 768.5h18`}
              shapeRendering="crispEdges"
            />
          ))}
        </g>
        <path d="M974.5 461 991.5 494H958z" fill="#0ff" />
        {junctionXs.map((x) => (
          <circle key={x} cx={x + 0.5} cy="314.5" r="4.5" fill="#0f0" />
        ))}
        <path d="M1379 310h8v8h-8z" fill="#0f0" />
        <g fill="#ff0" fontSize="23">
          {labels.map(([text, x, y]) => (
            <text key={text} x={x} y={y}>
              {text}
            </text>
          ))}
        </g>
        <g fill="#ff0" fontSize="13">
          <text x="648" y="311">
            V_IN
          </text>
          <text x="1318" y="294">
            V_OUT
          </text>
          <text transform="translate(822 310) rotate(-90)">S</text>
        </g>
      </g>
    </svg>
  );
}

function Document() {
  return (
    <main className="mx-1 flex min-w-0 flex-1 flex-col">
      <div className="flex h-[23px] shrink-0 items-end justify-between pt-px pr-[6px] pl-[6px]">
        <div role="tablist" className="isolate flex h-full">
          <button
            type="button"
            role="tab"
            className="relative flex w-[97px] items-center gap-[2px] pt-px pl-[20px] whitespace-nowrap"
          >
            <TabShape />
            <Icon name="startPage" />
            Start Page
          </button>
          <button
            type="button"
            role="tab"
            className="relative flex w-[110px] items-center gap-[5px] pt-px pl-[7px] whitespace-nowrap"
          >
            <TabShape />
            <Icon name="docSheet" />
            Schematic.Os..
          </button>
          <div className="relative -ml-[15px] flex w-[146px] items-center pt-px pr-[7px] pl-[21px] whitespace-nowrap">
            <TabShape active />
            <Icon name="docSheet" />
            <button type="button" role="tab" className="ml-2 font-semibold">
              Schematic.Bu...
            </button>
            <button type="button" aria-label="Close tab" className="ml-auto">
              <svg viewBox="0 0 9 9" className="h-[9px] w-[9px]">
                <path d="M1 1l7 7M8 1 1 8" stroke="#000" strokeWidth="1.6" />
              </svg>
            </button>
          </div>
        </div>
        <button type="button" aria-label="Open documents" className="mb-[8px] flex">
          <span className="h-0 w-0 border-x-5 border-t-5 border-x-transparent border-t-black" />
        </button>
      </div>
      <div className="flex min-h-0 flex-1 border border-[#98a0aa] bg-[#b0d8f2] pt-1 pr-[5px] pb-[5px] pl-1">
        <div className="grid min-h-0 min-w-0 flex-1 grid-cols-[1fr_17px] grid-rows-[1fr_17px] border border-[#777] border-r-white border-b-white bg-[#f0f0f0]">
          <div className="min-h-0 min-w-0 overflow-hidden">
            <Schematic />
          </div>
          <div className="flex flex-col items-center">
            <ScrollArrow dir="up" />
            <span className="flex w-[15px] flex-1 flex-col">
              <span className="flex-[150]" />
              <span className="flex-[374] bg-[#cdcdcd]" />
              <span className="flex-[282]" />
            </span>
            <ScrollArrow dir="down" />
          </div>
          <div className="flex items-center">
            <ScrollArrow dir="left" />
            <span className="flex h-[15px] flex-1">
              <span className="flex-[319]" />
              <span className="flex-[539] bg-[#cdcdcd]" />
              <span className="flex-[353]" />
            </span>
            <ScrollArrow dir="right" />
          </div>
        </div>
      </div>
      <div className="h-[7px] shrink-0 border-b-2 border-[#c0cedd]" />
    </main>
  );
}

const properties = [
  { name: "Name", value: "BuckConverter" },
  { name: "Drawing Size", value: "B" },
  { name: "Orientation", value: "Landscape" },
  { name: "Width", value: "17.000 in" },
  { name: "Height", value: "11.000 in" },
  { name: "", value: "" },
];

function Properties() {
  return (
    <aside className="flex w-[264px] shrink-0 flex-col">
      <PanelHeader title="Properties" />
      <div className="mb-[5px] flex min-h-0 flex-1 flex-col bg-[#f0f0f0] px-[3px] pb-[3px]">
        <div className="flex-1 bg-white">
          <table className="w-full table-fixed border-collapse border-b border-[#a0a0a0] text-left">
            <thead>
              <tr className="h-[22px] border-b border-[#a0a0a0]">
                <th className="w-[148px] border-r border-[#a0a0a0] pl-6 font-normal">Property</th>
                <th className="pl-[29px] font-normal">Value</th>
              </tr>
            </thead>
            <tbody>
              {properties.map((row) => (
                <tr key={row.name} className="h-[22px]">
                  <td className="border-r border-b border-[#a0a0a0] pl-6 [border-bottom-style:dotted]">{row.name}</td>
                  <td className="border-b border-[#a0a0a0] pl-6 whitespace-nowrap [border-bottom-style:dotted]">
                    {row.value}
                  </td>
                </tr>
              ))}
            </tbody>
          </table>
        </div>
        <div className="h-[70px] border-t border-l border-[#999]" />
      </div>
      <div className="h-[2px] shrink-0 bg-[#c0cedd]" />
    </aside>
  );
}

function StatusBar() {
  return (
    <footer className="flex h-[23px] shrink-0 items-center border-t border-b-2 border-t-[#d8dade] border-b-[#3a3a3e] bg-[#f0f0f0] whitespace-nowrap">
      <span className="flex-1 pl-[5px]">Command</span>
      <span className="w-[66px] border-l border-[#d5d5d5] pl-1 leading-[18px]">Select</span>
      <span className="h-[18px] w-[112px] border-l border-[#d5d5d5]" />
      <span className="h-[18px] w-[175px] border-l border-[#d5d5d5]" />
      <span className="w-[59px] border-l border-[#d5d5d5] pl-[3px] leading-[18px]">Sheet Buck</span>
      <span className="w-[26px] border-l border-[#d5d5d5] pl-[3px] leading-[18px] text-[#8a8a8a]">CAP</span>
      <span className="h-[18px] w-[26px] border-l border-[#d5d5d5]" />
      <span className="flex h-[18px] w-[22px] items-center justify-center border-l border-[#d5d5d5]">
        <span className="h-[11px] w-[11px] rounded-full border border-[#3c7a34] bg-radial-[at_40%_30%] from-[#8cf07a] to-[#22a81c]" />
      </span>
      <span className="flex h-[18px] w-[22px] items-center justify-center border-l border-[#d5d5d5]">
        <Icon name="panZoom" />
      </span>
      <span className="w-[186px] border-l border-[#d5d5d5] pl-1 leading-[18px]">Online - local</span>
      <span className="h-[18px] w-[60px] border-l border-[#d5d5d5]" />
      <span className="w-[340px] border-l border-[#d5d5d5] pl-[3px] leading-[18px]">
        Library: C:\MentorGraphics\...\CentralLibrary\EDULIB\EDULIB.lmc
      </span>
    </footer>
  );
}

export default function App() {
  return (
    <div className="flex h-screen flex-col overflow-hidden bg-[#ecedfb] font-['Open_Sans','Noto_Sans',sans-serif] text-[11px] text-black">
      <MenuArea />
      <div className="flex min-h-0 flex-1">
        <Navigator />
        <Document />
        <Properties />
        <div className="w-[23px] shrink-0 pt-1 pl-[2px]">
          <button
            type="button"
            className="h-[107px] w-[21px] border-b border-[#ccc] bg-[#f0f0f0] text-xs text-[#666] [writing-mode:vertical-rl]"
          >
            Project Integration
          </button>
        </div>
      </div>
      <StatusBar />
    </div>
  );
}
